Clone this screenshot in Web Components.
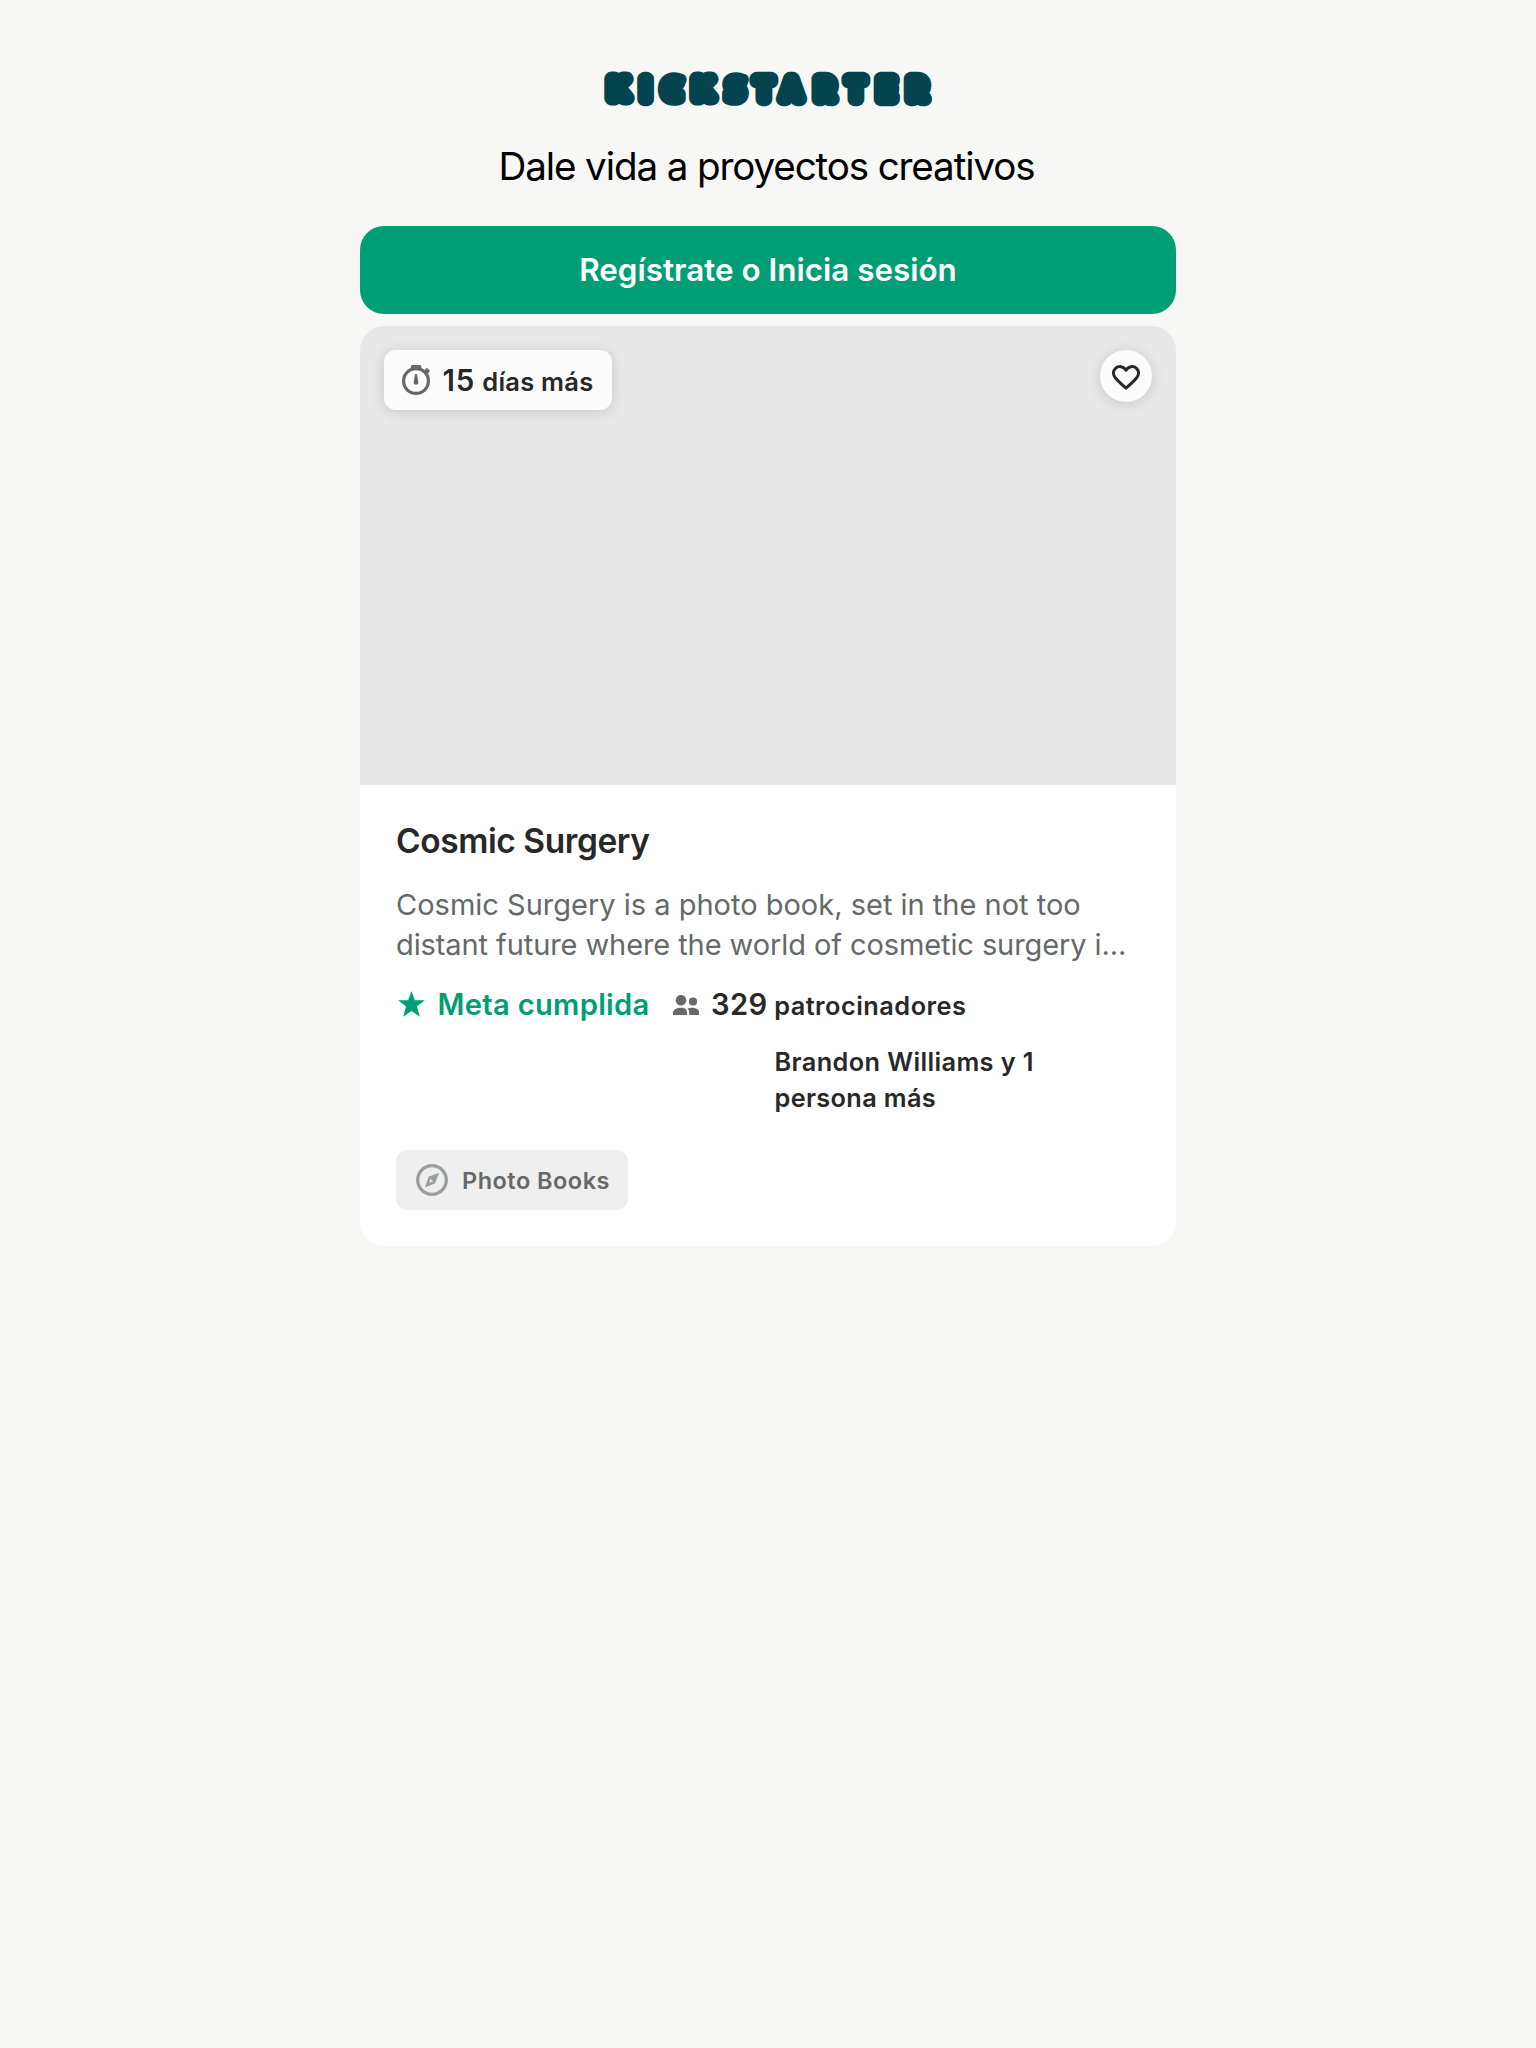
<!DOCTYPE html>
<html lang="es">
<head>
<meta charset="utf-8">
<title>Kickstarter</title>
<style>
  body { margin: 0; background: #f7f7f5; font-family: Inter, "Liberation Sans", sans-serif; color: #282828; }
</style>
</head>
<body>
<ks-page>
  <ks-logo></ks-logo>
  <ks-tagline>Dale vida a proyectos creativos</ks-tagline>
  <ks-button>Regístrate o Inicia sesión</ks-button>
  <ks-project-card>
    <ks-deadline slot="badge" count="15">días más</ks-deadline>
    <ks-save slot="save"></ks-save>
    <span slot="title">Cosmic Surgery</span>
    <span slot="blurb-1">Cosmic Surgery is a photo book, set in the not too</span>
    <span slot="blurb-2">distant future where the world of cosmetic surgery i...</span>
    <ks-stats slot="stats" count="329"><span slot="goal">Meta cumplida</span>patrocinadores</ks-stats>
    <ks-creator slot="creator"><div>Brandon Williams y 1</div><div style="letter-spacing:.35px">persona más</div></ks-creator>
    <ks-chip slot="category">Photo Books</ks-chip>
  </ks-project-card>
</ks-page>
<script>
const define = (name, render) => customElements.define(name, class extends HTMLElement {
  connectedCallback() {
    if (this.shadowRoot) return;
    this.attachShadow({ mode: 'open' }).innerHTML = render(this);
  }
});

define('ks-page', () => `<style>
  :host { display: flex; flex-direction: column; align-items: stretch; width: 816px; min-height: 2048px; margin: 0 auto; padding-top: 72px; box-sizing: border-box; }
</style><slot></slot>`);

define('ks-logo', () => `<style>
  :host { display: flex; justify-content: center; height: 34px; }
  svg { overflow: visible; }
  text { font: 400 26.6px Inter, sans-serif; text-anchor: middle; fill: #03444f; stroke: #03444f; stroke-width: 14.3px; stroke-linejoin: round; }
  .k { font: 400 27px "Liberation Sans", sans-serif; stroke-width: 15px; }
  .c { font: 800 30.4px "Open Sans", sans-serif; stroke-width: 11.6px; }
</style>
<svg width="329" height="34" viewBox="604 72 329 34" role="img" aria-label="Kickstarter">
  <text x="618.5 645.5 671.8 703.3 735.3 763.8 791.5 824.7 855.8 886.6 917" y="98.2 98.500 99.700 98.200 99.700 98.500 98.500 98.500 98.500 98.500 98.500"><tspan class="k">K</tspan>I<tspan class="c">C</tspan><tspan class="k">K</tspan><tspan class="c">S</tspan>TARTER</text>
</svg>`);

define('ks-tagline', () => `<style>
  :host { display: block; margin: 30px 0; padding-right: 3px; text-align: center; font-size: 38.6px; line-height: 60px; letter-spacing: -1.12px; color: #000; white-space: nowrap; }
</style><slot></slot>`);

define('ks-button', () => `<style>
  :host { display: flex; align-items: center; justify-content: center; height: 88px; padding-bottom: 1px; box-sizing: border-box; border-radius: 24px; background: #009e74; color: #fff; font-weight: 600; font-size: 31.4px; letter-spacing: .01px; }
</style><slot></slot>`);

define('ks-project-card', () => `<style>
  :host { display: flex; flex-direction: column; margin-top: 12px; border-radius: 24px; overflow: hidden; background: #fff; }
  .media { display: flex; justify-content: space-between; align-items: flex-start; height: 411px; padding: 24px; background: #e8e8e8; }
  .body { display: flex; flex-direction: column; align-items: flex-start; padding: 34px 36px 36px; }
  h2 { margin: 0 0 22px; font-weight: 600; font-size: 33.5px; line-height: 44px; letter-spacing: -.43px; }
  p { margin: 0 0 20px; font-size: 29px; line-height: 40px; color: #656969; white-space: nowrap; }
  .l1, .l2 { display: block; }
  .l2 { letter-spacing: -.09px; }
  .creator { margin: 19px 0 34px 378.5px; }
</style>
<div class="media"><slot name="badge"></slot><slot name="save"></slot></div>
<div class="body">
  <h2><slot name="title"></slot></h2>
  <p><span class="l1"><slot name="blurb-1"></slot></span><span class="l2"><slot name="blurb-2"></slot></span></p>
  <slot name="stats"></slot>
  <div class="creator"><slot name="creator"></slot></div>
  <slot name="category"></slot>
</div>`);

define('ks-deadline', el => `<style>
  :host { display: flex; align-items: center; width: 228px; height: 60px; box-sizing: border-box; padding-left: 18px; border-radius: 12px; background: #fcfcfc; box-shadow: 0 2px 14px rgba(0,0,0,.14); white-space: nowrap; font-weight: 600; }
  .t { display: flex; align-items: baseline; margin: 0 0 0 12.5px; }
  b { font-weight: 600; font-size: 29.5px; letter-spacing: .9px; margin-right: 7px; }
  i { font-style: normal; font-size: 25.5px; letter-spacing: .22px; }
</style>
<svg width="28" height="30" viewBox="0 0 28 30" fill="#656969">
  <circle cx="14" cy="16" r="12.4" fill="none" stroke="#656969" stroke-width="3.2"/>
  <path d="M10.2 0h7.8q1.2 0 1.3 1.4l.3 2.6h-11l.3-2.6Q9 0 10.2 0Z"/>
  <path d="M22.3 5.2 24 3.4q.8-.7 1.6.1l1.8 1.8q.7.8 0 1.6L25.9 8.6Z"/>
  <path d="M13 9.2q1-.8 2 0l1.4 8.2a2.4 2.4 0 0 1-4.8 0Z"/>
</svg>
<span class="t"><b>${el.getAttribute('count')}</b><i><slot></slot></i></span>`);

define('ks-save', () => `<style>
  :host { display: flex; align-items: center; justify-content: center; width: 52px; height: 52px; padding-top: 2px; box-sizing: border-box; border-radius: 50%; background: #fcfcfc; box-shadow: 0 2px 14px rgba(0,0,0,.14); }
</style>
<svg width="28" height="25" viewBox="0 0 28 25" fill="none" stroke="#282828" stroke-width="3" stroke-linejoin="round" stroke-linecap="round">
  <path d="M14 5.2C11.8 1.2 6.500.5 3.500 3.4c-2.700 2.700-2.600 6.500-.2 9.300C5.600 15.500 10 19.600 14 23.100c4-3.500 8.400-7.600 10.700-10.400 2.400-2.800 2.500-6.600-.2-9.300C21.500.5 16.200 1.200 14 5.200Z"/>
</svg>`);

define('ks-stats', el => `<style>
  :host { display: flex; align-items: center; height: 40px; white-space: nowrap; font-weight: 600; font-size: 29.2px; line-height: 40px; }
  .goal { color: #009e74; letter-spacing: .28px; margin: 0 23px 0 13px; width: 212px; }
  .star { margin: -2px 0 0 1.5px; }
  .people { margin-top: -1px; }
  .t { display: flex; align-items: baseline; margin-left: 12.5px; }
  b { font-weight: 600; letter-spacing: .4px; margin-right: 6.5px; }
  i { font-style: normal; font-size: 25.3px; letter-spacing: .5px; }
</style>
<svg class="star" width="27" height="26" viewBox="0 0 27 26" fill="#009e74"><path d="M13.500 0 16.800 9.300H26.800L18.900 15.500 21.900 25.800 13.500 20 5.100 25.800 8.100 15.500 .2 9.300H10.200Z"/></svg>
<span class="goal"><slot name="goal"></slot></span>
<svg class="people" width="26" height="20" viewBox="0 0 26 20" fill="#656969">
  <circle cx="8" cy="5.200" r="5.300"/><circle cx="20" cy="6.500" r="4.1"/>
  <path d="M0 20v-2.200C0 14.500 3.800 12.700 8 12.700s6 1.800 6 5.100V20Z"/>
  <path d="M16.200 20v-2.400c0-1.700-.6-3-1.700-4.100 1.200-.4 2.800-.7 4.500-.7 4 0 7 1.600 7 4.500V20Z"/>
</svg>
<span class="t"><b>${el.getAttribute('count')}</b><i><slot></slot></i></span>`);

define('ks-creator', () => `<style>
  :host { display: block; font-weight: 600; font-size: 25.3px; line-height: 36px; letter-spacing: .4px; white-space: nowrap; }
</style><slot></slot>`);

define('ks-chip', () => `<style>
  :host { display: flex; align-items: center; gap: 14px; width: 232px; height: 60px; box-sizing: border-box; padding-left: 20px; border-radius: 12px; background: #efefef; color: #656969; font-weight: 600; font-size: 23.500px; letter-spacing: .49px; white-space: nowrap; }
</style>
<svg width="32" height="32" viewBox="0 0 32 32">
  <circle cx="16" cy="16" r="14.300" fill="none" stroke="#9b9e9e" stroke-width="3.3"/>
  <path fill="#9b9e9e" fill-rule="evenodd" d="M23.300 8.700 18.900 19.400 8.900 23.400 12.700 12.500ZM14.400 15 13.300 18.800 17 17.300Z"/>
</svg><slot></slot>`);
</script>
</body>
</html>
